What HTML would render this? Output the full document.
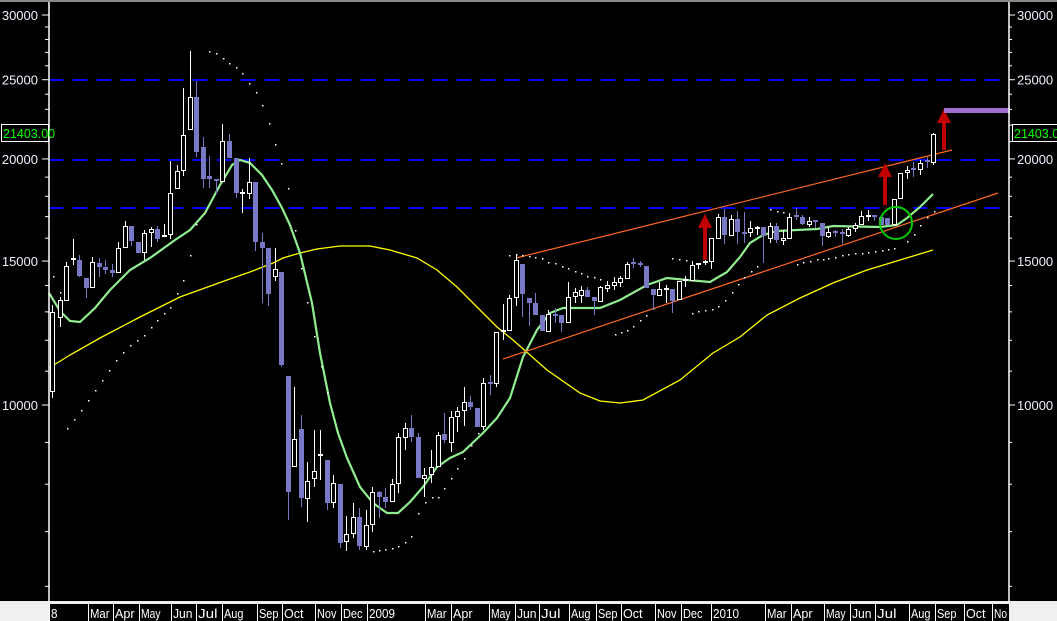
<!DOCTYPE html>
<html><head><meta charset="utf-8"><style>
html,body{margin:0;padding:0;background:#000;width:1057px;height:621px;overflow:hidden}
svg{display:block}
text{font-family:"Liberation Sans",sans-serif}
</style></head><body>
<svg id="s" width="1057" height="621" xmlns="http://www.w3.org/2000/svg">
<rect width="1057" height="621" fill="#000"/>
<rect x="0" y="0" width="1057" height="2" fill="#888"/>
<g id="grid"></g>
<g id="ma"></g>
<g id="candles"></g>
<g id="ov"></g>
<g id="axes"></g>
</svg>
<script>
var NS="http://www.w3.org/2000/svg";
function el(p,t,a,txt){var e=document.createElementNS(NS,t);for(var k in a)e.setAttribute(k,a[k]);if(txt!==undefined)e.textContent=txt;document.getElementById(p).appendChild(e);return e;}
// blue dashed
[80,160,208].forEach(function(y){el('grid','line',{x1:49,x2:1008,y1:y,y2:y,stroke:'#0000ff','stroke-width':2,'stroke-dasharray':'14 10'});});
// yellow MA
var yl=[[49,368],[70,355],[100,338],[140,317],[180,297],[227,280],[250,272],[273,263],[283,258],[300,253],[317,249],[340,246],[370,246],[390,250],[417,258],[437,270],[457,287],[477,307],[497,327],[513,340],[547,370],[580,393],[600,401],[620,403],[643,400],[680,380],[713,353],[740,337],[767,315],[800,298],[833,283],[867,270],[900,260],[933,250]];
el('ma','polyline',{points:yl.join(' '),fill:'none',stroke:'#ffff00','stroke-width':1.3});
// green MA
var gl=[[49,293],[60,311],[70,321],[80,322],[95,308],[110,290],[130,270],[150,258],[175,240],[190,230],[205,213],[220,185],[232,165],[240,160],[250,163],[262,175],[272,190],[282,208],[290,225],[300,253],[312,303],[320,353],[330,403],[338,433],[347,458],[360,487],[373,503],[387,513],[398,513],[410,502],[423,487],[437,467],[450,458],[463,452],[483,433],[497,418],[510,398],[523,357],[537,330],[550,313],[563,308],[600,308],[620,300],[647,285],[667,278],[687,280],[710,282],[727,272],[740,257],[750,243],[763,235],[777,231],[817,229],[833,226],[880,227],[897,225],[907,218],[920,207],[933,194]];
el('ma','polyline',{points:gl.join(' '),fill:'none',stroke:'#90ee90','stroke-width':2.2});
// orange channel
el('ma','line',{x1:516,y1:258,x2:952,y2:150,stroke:'#ff6a20','stroke-width':1.2});
el('ma','line',{x1:503,y1:359,x2:998,y2:193,stroke:'#ff6a20','stroke-width':1.2});
// SAR dots
var dots=[[53,276],[60,292],[67,428],[74,419],[81,410],[88,400],[95,390],[102,380],[109,370],[116,360],[123,352],[130,345],[137,340],[144,335],[151,327],[157,320],[164,313],[170,307],[177,293],[183,280],[190,255],[196,224],
[209,51],[216,53],[223,58],[229,63],[236,67],[242,73],[249,83],[256,92],[262,105],[269,123],[275,144],[281,163],[288,188],[295,230],[301,268],[307,302],[314,336],[321,366],[327,392],
[373,551],[379,550],[385,549],[392,548],[398,546],[405,542],[411,536],[418,513],[425,502],[432,497],[438,497],[444,488],[451,478],[457,468],[464,458],[471,445],[478,433],
[509,255],[516,254],[522,255],[529,256],[535,257],[542,258],[548,262],[555,263],[562,266],[568,268],[575,271],[581,273],[587,276],[594,277],[600,279],
[615,334],[621,332],[627,330],[633,326],[640,320],[646,315],[653,308],[672,258],[679,259],[686,260],
[692,313],[698,311],[705,310],[712,309],[718,306],[725,300],[732,292],[738,284],[744,277],[751,271],[757,266],[770,209],[777,211],[783,212],
[797,264],[803,262],[810,261],[817,259],[823,259],[828,258],[835,257],[842,255],[848,254],[855,253],[862,253],[868,252],[875,251],[882,250],[888,249],[894,248],[907,241],[914,234],[920,225],[927,217],[934,211]];
dots.forEach(function(d){el('ma','rect',{x:d[0],y:d[1],width:1.5,height:1.5,fill:'#fff'});});
// candles
var C=[[52,312,392,305,398,'w'],[60,300,318,297,327,'w'],[66,266,301,262,301,'w'],[73,259,259,239,265,'w'],[79,260,276,255,277,'b'],[86,278,288,278,298,'b'],[92,262,288,257,288,'w'],[99,263,267,258,277,'b'],[105,267,270,260,274,'b'],[112,270,273,264,277,'b'],[118,248,273,242,273,'w'],[125,226,248,221,248,'w'],[131,226,241,226,246,'b'],[138,242,253,242,253,'b'],[144,233,253,230,260,'w'],[151,229,233,227,247,'w'],[157,229,239,226,242,'b'],[164,235,237,224,237,'w'],[170,193,235,161,239,'w'],[177,171,189,165,189,'w'],[183,135,171,88,176,'w'],[190,97,130,51,130,'w'],[196,97,152,81,157,'b'],[203,147,179,137,188,'b'],[209,176,179,156,188,'b'],[216,180,181,180,194,'b'],[222,141,182,124,182,'w'],[229,141,158,134,158,'b'],[236,158,193,158,198,'b'],[242,193,193,189,213,'w'],[249,182,194,158,199,'w'],[255,182,242,182,251,'b'],[262,242,248,233,303,'b'],[268,248,294,248,306,'b'],[275,269,277,248,281,'w'],[281,272,365,272,367,'b'],[288,376,492,376,520,'b'],[294,439,467,387,467,'w'],[301,429,498,415,507,'b'],[307,481,499,462,522,'w'],[314,471,479,430,487,'w'],[320,455,456,430,480,'w'],[327,460,503,460,510,'b'],[333,483,503,475,508,'w'],[340,484,543,484,548,'b'],[346,534,542,516,551,'w'],[353,517,534,503,538,'w'],[359,517,546,508,550,'b'],[366,525,547,510,550,'w'],[372,492,525,487,532,'w'],[379,492,497,491,518,'b'],[385,497,502,488,508,'b'],[392,484,502,479,502,'w'],[398,437,484,433,493,'w'],[405,428,438,423,450,'w'],[411,428,437,415,442,'b'],[418,437,478,433,478,'b'],[424,475,479,468,497,'w'],[431,467,475,450,483,'w'],[438,435,467,432,467,'w'],[444,434,440,413,443,'b'],[451,417,443,411,452,'w'],[457,411,417,407,432,'w'],[464,402,411,387,426,'w'],[470,402,407,396,410,'b'],[477,408,427,408,427,'b'],[483,383,427,378,430,'w'],[490,383,384,375,395,'b'],[496,332,384,332,387,'w'],[503,331,331,304,340,'w'],[509,298,331,295,331,'w'],[516,260,298,255,306,'w'],[522,264,294,264,317,'b'],[529,298,303,298,326,'b'],[535,303,315,293,315,'b'],[542,315,331,315,331,'b'],[548,314,332,310,332,'w'],[555,315,315,308,323,'b'],[561,315,323,315,332,'b'],[568,297,323,282,323,'w'],[575,292,297,288,303,'w'],[581,290,296,286,303,'w'],[587,290,297,287,297,'b'],[594,297,301,297,315,'b'],[600,287,302,286,302,'w'],[607,285,289,281,292,'w'],[614,282,286,277,290,'w'],[620,278,283,276,287,'w'],[627,264,279,262,279,'w'],[633,263,263,258,268,'b'],[640,264,264,261,267,'b'],[646,266,288,266,288,'b'],[653,289,295,289,310,'b'],[659,289,296,282,296,'w'],[666,289,289,285,303,'w'],[672,289,301,289,313,'b'],[679,281,300,281,300,'w'],[685,280,281,276,287,'w'],[692,265,281,261,281,'w'],[698,263,265,263,269,'w'],[705,261,263,258,265,'w'],[711,238,262,238,269,'w'],[718,217,239,214,239,'w'],[724,217,235,209,244,'b'],[731,219,236,215,236,'w'],[737,219,232,211,244,'b'],[744,233,233,212,243,'b'],[750,228,233,221,237,'w'],[757,228,228,226,235,'w'],[763,227,236,227,263,'b'],[770,226,239,223,243,'w'],[776,226,240,223,243,'b'],[783,238,241,230,245,'w'],[789,217,239,213,239,'w'],[796,216,216,208,220,'b'],[802,217,224,215,225,'b'],[809,221,225,217,227,'w'],[815,220,222,220,228,'b'],[822,223,236,223,246,'b'],[828,232,237,227,238,'w'],[835,232,232,230,237,'b'],[842,233,233,229,244,'b'],[848,229,236,227,237,'w'],[855,225,229,223,232,'w'],[861,216,225,211,225,'w'],[868,216,216,210,221,'w'],[874,216,216,216,221,'b'],[881,217,225,217,225,'b'],[887,218,225,218,225,'b'],[894,199,225,199,226,'w'],[900,173,199,173,199,'w'],[907,170,173,166,179,'w'],[913,169,169,162,177,'b'],[920,163,170,160,175,'w'],[927,161,161,157,168,'b'],[933,134,163,133,165,'w']];
var B='#7878c4';
C.forEach(function(c){var x=c[0],col=c[5]=='w'?'#fff':B;
 el('candles','line',{x1:x+0.5,x2:x+0.5,y1:c[3],y2:c[4],stroke:col,'stroke-width':1});
 var h=c[2]-c[1];
 if(h<2){el('candles','rect',{x:x-2,y:c[1]-1,width:5,height:2,fill:col});}
 else if(c[5]=='w'){el('candles','rect',{x:x-1.5,y:c[1]+0.5,width:4,height:h-1,fill:'#000',stroke:'#fff','stroke-width':1});}
 else{el('candles','rect',{x:x-2,y:c[1],width:5,height:h,fill:B});}
});
// arrows
function arrow(x,ap,base,end){el('ov','rect',{x:x-2,y:base,width:4,height:end-base,fill:'#c00000'});el('ov','polygon',{points:(x-7)+','+base+' '+(x+7)+','+base+' '+x+','+ap,fill:'#c00000'});}
arrow(705,214,228,260);arrow(885,163,177,205);arrow(944,109,123,150);
el('ov','rect',{x:944,y:108,width:66,height:5,fill:'#a070d0'});
el('ov','circle',{cx:896,cy:223,r:16,fill:'none',stroke:'#00cc00','stroke-width':2});
// axes
el('axes','line',{x1:49,x2:49,y1:2,y2:603,stroke:'#fff','stroke-width':1.5});
el('axes','line',{x1:1009,x2:1009,y1:2,y2:603,stroke:'#fff','stroke-width':1.5});
for(var v=6000;v<=31000;v+=1000){var y=405-355*Math.log(v/10000);if(y<4)continue;var maj=(v%5000==0);
 el('axes','line',{x1:maj?42:45,x2:49,y1:y,y2:y,stroke:'#fff','stroke-width':1});
 el('axes','line',{x1:1009,x2:maj?1015:1012,y1:y,y2:y,stroke:'#fff','stroke-width':1});
 if(maj){el('axes','text',{x:38,y:y+5,'text-anchor':'end','font-size':13,fill:'#f0f0ff'},String(v));
 el('axes','text',{x:1017,y:y+5,'font-size':13,fill:'#f0f0ff'},String(v));}}
el('axes','rect',{x:1.5,y:124.5,width:47,height:17,fill:'#000',stroke:'#fff'});
el('axes','text',{x:3,y:138,'font-size':12.5,fill:'#00ff00'},'21403.00');
el('axes','rect',{x:1012.5,y:124.5,width:50,height:17,fill:'#000',stroke:'#fff'});
el('axes','text',{x:1014,y:138,'font-size':12.5,fill:'#00ff00'},'21403.00');
// bottom strip
el('axes','rect',{x:0,y:601,width:1057,height:3,fill:'#eee'});
el('axes','rect',{x:0,y:604,width:1057,height:17,fill:'#f0f0f0'});
el('axes','rect',{x:49,y:604,width:960,height:17,fill:'#000'});
var L=[[49,'8'],[88,'Mar'],[113,'Apr'],[139,'May'],[171,'Jun'],[196,'Jul'],[222,'Aug'],[257,'Sep'],[282,'Oct'],[315,'Nov'],[341,'Dec'],[367,'2009'],[425,'Mar'],[451,'Apr'],[489,'May'],[515,'Jun'],[539,'Jul'],[569,'Aug'],[596,'Sep'],[621,'Oct'],[655,'Nov'],[681,'Dec'],[711,'2010'],[765,'Mar'],[791,'Apr'],[824,'May'],[850,'Jun'],[875,'Jul'],[909,'Aug'],[935,'Sep'],[964,'Oct'],[992,'No']];
L.forEach(function(l){el('axes','line',{x1:l[0]+0.5,x2:l[0]+0.5,y1:604,y2:621,stroke:'#fff','stroke-width':1});
 el('axes','text',{x:l[0]+2,y:618,'font-size':12.5,fill:'#fff',textLength:(l[1].length*6.5),lengthAdjust:'spacingAndGlyphs'},l[1]);});
</script>
</body></html>
